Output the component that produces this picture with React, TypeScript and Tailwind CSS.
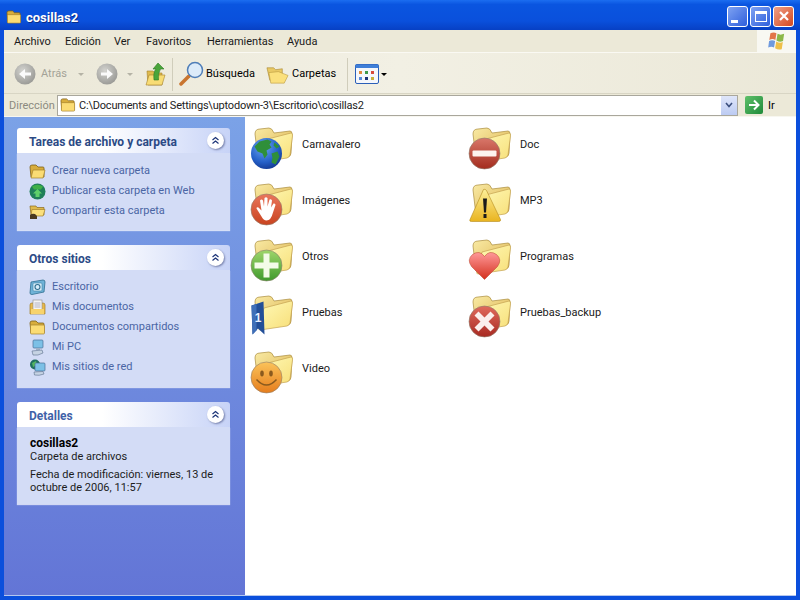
import * as React from 'react';

const FONT = "font-['Roboto','Liberation_Sans',sans-serif]";

const BigFolder: React.FC<{ children?: React.ReactNode; id: string }> = ({ children, id }) => (
  <svg viewBox="0 0 44 44" className="w-[44px] h-[44px] shrink-0">
    <defs>
      <linearGradient id={`back-${id}`} x1="0" y1="0" x2="1" y2="1">
        <stop offset="0" stopColor="#f9eaa4" />
        <stop offset="1" stopColor="#dcb34f" />
      </linearGradient>
      <linearGradient id={`front-${id}`} x1="0" y1="0" x2="1" y2="1">
        <stop offset="0" stopColor="#fffab8" />
        <stop offset="1" stopColor="#f7de78" />
      </linearGradient>
    </defs>
    <path d="M5 8 Q5 3 10 3 L19 2 Q22 2 24 7 L40 5 Q42 5 42 8 L41 27 Q41 30 38 31 L8 33 Z" fill={`url(#back-${id})`} stroke="#a98b3c" strokeWidth="0.7" />
    <path d="M14 14 L41 7 Q43 7 42.5 10 L40 29 Q39.500 31 37 32 L10 36 Q8 36 9 33 Z" fill={`url(#front-${id})`} stroke="#c4a250" strokeWidth="0.7" />
    <g transform="translate(0.5 -1.5)">{children}</g>
  </svg>
);

const Globe = () => (
  <g>
    <defs>
      <radialGradient id="globe" cx="0.4" cy="0.3" r="0.8">
        <stop offset="0" stopColor="#6ba6f2" />
        <stop offset="0.6" stopColor="#2560c8" />
        <stop offset="1" stopColor="#0f2f86" />
      </radialGradient>
    </defs>
    <circle cx="16" cy="29" r="15.500" fill="url(#globe)" />
    <path d="M4 22 L9 17 L17 15 L21 17 L19 20 L21 23 L16 26 L17 30 L14 34 L12 29 L7 27 Z" fill="#2f8f3a" />
    <path d="M21 29 L27 27 L29 32 L25 40 L21 38 L22 33 Z" fill="#2f8f3a" />
    <path d="M24 18 L29 22 L26 24 L23 21 Z" fill="#2f8f3a" />
  </g>
);

const Stop: React.FC<{ id: string; children: React.ReactNode; top?: string; bottom?: string }> = ({
  id,
  children,
  top = '#ee7d63',
  bottom = '#b8331c',
}) => (
  <g>
    <defs>
      <linearGradient id={id} x1="0" y1="0" x2="0" y2="1">
        <stop offset="0" stopColor={top} />
        <stop offset="1" stopColor={bottom} />
      </linearGradient>
    </defs>
    <circle cx="16" cy="29" r="15.500" fill={`url(#${id})`} stroke="#8f7f6f" strokeWidth="0.6" />
    {children}
  </g>
);

const Hand = () => (
  <Stop id="hand" top="#e9765c" bottom="#c9431f">
    <path d="M11 36 L6 28 Q6 26 8 27 L11 30 L9.500 20 Q11 18 12.500 20 L13.500 26 L14 17.500 Q15.500 16 17 17.500 L17 26 L19 19 Q20.500 18 21.500 20 L20.500 27 L23 23 Q25 22.500 25 24.500 L22.500 32 Q20.500 40 16 40 Q13 40 11 36 Z" fill="#fff" />
  </Stop>
);

const Plus = () => (
  <Stop id="plus" top="#9fd66b" bottom="#3f9a2d">
    <path d="M13 17 H19 V26 H28 V32 H19 V41 H13 V32 H4 V26 H13 Z" fill="#f3fbe8" />
  </Stop>
);

const Ribbon = () => (
  <g>
    <path d="M1 13 L13 9 L14 42 L7.500 36 L2 42 Z" fill="#234f98" />
    <path d="M1 13 L6 11.500 L6 38 L2 42 Z" fill="#3f6fb8" />
    <text x="7.500" y="29" fontSize="12" fontWeight="700" textAnchor="middle" fill="#e8f0ff" className="font-['Liberation_Sans']">1</text>
  </g>
);

const Smile = () => (
  <Stop id="smile" top="#fbc35a" bottom="#e57d1d">
    <ellipse cx="11.500" cy="25" rx="1.800" ry="3" fill="#8a5a1e" />
    <ellipse cx="20.500" cy="25" rx="1.800" ry="3" fill="#8a5a1e" />
    <path d="M6 31 Q16 42 26 31" fill="none" stroke="#8a5a1e" strokeWidth="1.500" />
  </Stop>
);

const Minus = () => (
  <Stop id="minus" top="#d9776a" bottom="#a32c1d">
    <rect x="4" y="26" width="24" height="6" rx="1" fill="#fdf3ee" />
  </Stop>
);

const Warning = () => (
  <g>
    <defs>
      <linearGradient id="warn" x1="0" y1="0" x2="0" y2="1">
        <stop offset="0" stopColor="#fdf09a" />
        <stop offset="1" stopColor="#e9b420" />
      </linearGradient>
    </defs>
    <path d="M15 9 Q16.500 8 18 10 L32 39 Q32.500 41 30 41 L3 41 Q0.500 41 1.500 39 Z" fill="url(#warn)" stroke="#b48a1c" strokeWidth="0.6" />
    <path d="M14.500 18 H18.500 L17.500 32 H15.500 Z" fill="#1a1a1a" />
    <rect x="15" y="33.500" width="3" height="4" fill="#1a1a1a" />
  </g>
);

const Heart = () => (
  <g>
    <defs>
      <linearGradient id="heart" x1="0" y1="0" x2="0" y2="1">
        <stop offset="0" stopColor="#f99" />
        <stop offset="1" stopColor="#d4301e" />
      </linearGradient>
    </defs>
    <path d="M16 43 L3 30 Q-2 23 4 18 Q11 13 16 20 Q21 13 28 18 Q34 23 29 30 Z" fill="url(#heart)" stroke="#b8402a" strokeWidth="0.5" />
  </g>
);

const Cross = () => (
  <Stop id="cross" top="#e06a5c" bottom="#a82a22">
    <path d="M10 19 L16 25 L22 19 L26 23 L20 29 L26 35 L22 39 L16 33 L10 39 L6 35 L12 29 L6 23 Z" fill="#fbefec" />
  </Stop>
);

const files = [
  { name: 'Carnavalero', overlay: <Globe /> },
  { name: 'Doc', overlay: <Minus /> },
  { name: 'Imágenes', overlay: <Hand /> },
  { name: 'MP3', overlay: <Warning /> },
  { name: 'Otros', overlay: <Plus /> },
  { name: 'Programas', overlay: <Heart /> },
  { name: 'Pruebas', overlay: <Ribbon /> },
  { name: 'Pruebas_backup', overlay: <Cross /> },
  { name: 'Video', overlay: <Smile /> },
];

const SmallFolder: React.FC<{ open?: boolean; className?: string }> = ({ open, className = 'w-[17px] h-[17px]' }) => (
  <svg viewBox="0 0 17 17" className={className + ' shrink-0'}>
    <path d="M1 4 Q1 2 3 2 H7 L9 4 H14 Q15 4 15 5 V14 H2 Z" fill="#d8ad3c" stroke="#7f5f18" strokeWidth="0.8" />
    {open ? (
      <path d="M2 15 L4 7 H16 L14 15 Z" fill="#fbdc74" stroke="#a5812c" strokeWidth="0.7" />
    ) : (
      <rect x="1.500" y="6" width="14" height="9" rx="1" fill="#fbdc74" stroke="#a5812c" strokeWidth="0.7" />
    )}
  </svg>
);

const GlobeSmall = () => (
  <svg viewBox="0 0 17 17" className="w-[17px] h-[17px] shrink-0">
    <circle cx="8.500" cy="8.500" r="8" fill="#1f7f5a" />
    <path d="M3 3.500 Q8 0 14 3.500 L12 6.500 L5 6.500 Z" fill="#3fb048" />
    <path d="M8.500 6 L13 10.500 H10.500 V14 H6.500 V10.500 H4 Z" fill="#5ed06a" />
  </svg>
);

const ShareSmall = () => (
  <svg viewBox="0 0 17 17" className="w-[17px] h-[17px] shrink-0">
    <path d="M1 3 H7 L8 4.500 H15 V12 H2 Z" fill="#dfba4c" stroke="#8a6a1e" strokeWidth="0.7" />
    <path d="M3 6.500 H16 L14 13 H2 Z" fill="#fbe07c" stroke="#a5812c" strokeWidth="0.7" />
    <path d="M1 12 Q3 10 6 11 L8 13 V16 H1 Z" fill="#4a3a20" />
  </svg>
);

const DesktopSmall = () => (
  <svg viewBox="0 0 17 17" className="w-[17px] h-[17px] shrink-0">
    <path d="M2 3 L14 1 Q16 1 16 3 L15 13 L3 15.500 Q1 15.500 1 14 Z" fill="#6fb3d8" stroke="#2f6f8f" strokeWidth="0.8" />
    <rect x="4" y="4" width="9" height="8" rx="1" fill="#d8eefa" stroke="#3b7fa3" strokeWidth="0.6" />
    <circle cx="8.500" cy="8" r="2.500" fill="none" stroke="#2f6f8f" strokeWidth="1.100" />
  </svg>
);

const DocsSmall = () => (
  <svg viewBox="0 0 17 17" className="w-[17px] h-[17px] shrink-0">
    <path d="M1 6 Q1 4 3 4 H14 Q16 4 16 6 V15 H1 Z" fill="#e9b94a" stroke="#a5812c" strokeWidth="0.7" />
    <rect x="4" y="1" width="9" height="11" fill="#f4f4f4" stroke="#8a8a8a" strokeWidth="0.6" />
    <path d="M5.500 4 H11.500 M5.500 6 H11.500 M5.500 8 H11.500" stroke="#9a9ab0" strokeWidth="0.7" />
    <rect x="2" y="10" width="13" height="5" fill="#f7d36c" />
  </svg>
);

const PcSmall = () => (
  <svg viewBox="0 0 17 17" className="w-[17px] h-[17px] shrink-0">
    <rect x="4" y="1" width="10" height="8" rx="1" fill="#7cc0e6" stroke="#4a6f96" strokeWidth="0.7" />
    <path d="M7 9 H11 V11 H7 Z" fill="#9fb1c7" />
    <path d="M3 12 L13 11 L14 14 Q9 17 4 16 Z" fill="#c6d3e3" stroke="#5a6f8c" strokeWidth="0.6" />
  </svg>
);

const NetSmall = () => (
  <svg viewBox="0 0 17 17" className="w-[17px] h-[17px] shrink-0">
    <circle cx="6" cy="5.500" r="5" fill="#1f6f60" />
    <path d="M3 4 L7 2 L8 6 L4 8 Z" fill="#54b85e" />
    <rect x="6" y="4" width="10" height="8" rx="1" fill="#7cc0e6" stroke="#4a6f96" strokeWidth="0.7" />
    <path d="M5 13 L14 12.500 L15 15 Q10 17 5.500 16 Z" fill="#c6d3e3" stroke="#5a6f8c" strokeWidth="0.6" />
  </svg>
);

const Collapse = () => (
  <span className="w-[17px] h-[17px] rounded-full bg-white shadow-[1px_1px_2px_rgba(60,70,120,0.6)] flex items-center justify-center">
    <svg viewBox="0 0 9 9" className="w-[9px] h-[9px]">
      <path d="M1.500 4 L4.500 1.500 L7.500 4 M1.500 7.500 L4.500 5 L7.500 7.500" fill="none" stroke="#1c3478" strokeWidth="1.200" />
    </svg>
  </span>
);

const Panel: React.FC<{ title: string; titleClass?: string; children: React.ReactNode }> = ({
  title,
  titleClass = 'text-[#2c4a85]',
  children,
}) => (
  <section className="w-[213px]">
    <div className="h-[25px] rounded-t-[3px] bg-[linear-gradient(90deg,#ffffff_40%,#c7d3f7)] flex items-center justify-between pl-[12px] pr-[6px]">
      <h2 className={`mt-[2px] text-[12px] font-bold ${titleClass}`}>{title}</h2>
      <Collapse />
    </div>
    <div className="bg-[#d3dcf6] shadow-[0_1px_1px_rgba(255,255,255,0.7)]">{children}</div>
  </section>
);

const TaskLink: React.FC<{ icon: React.ReactNode; label: string }> = ({ icon, label }) => (
  <a className="h-[20px] flex items-center gap-[6px] text-[11px] text-[#4a65a4]">
    {icon}
    <span>{label}</span>
  </a>
);

const MenuItem: React.FC<{ label: string; w: string }> = ({ label, w }) => <span className={w}>{label}</span>;

const WinButton: React.FC<{ children: React.ReactNode; className: string }> = ({ children, className }) => (
  <div className={`w-[21px] h-[21px] rounded-[3px] border border-white flex items-center justify-center ${className}`}>
    {children}
  </div>
);

const NavArrow: React.FC<{ flip?: boolean }> = ({ flip }) => (
  <svg viewBox="0 0 22 22" className="w-[22px] h-[22px] shrink-0">
    <defs>
      <radialGradient id="nav" cx="0.4" cy="0.35" r="0.8">
        <stop offset="0" stopColor="#d4d4d0" />
        <stop offset="1" stopColor="#8f8f8b" />
      </radialGradient>
    </defs>
    <circle cx="11" cy="11" r="10.500" fill="url(#nav)" />
    <path
      d={flip ? 'M5 9.500 H11 V6 L17 11 L11 16 V12.500 H5 Z' : 'M17 9.500 H11 V6 L5 11 L11 16 V12.500 H17 Z'}
      fill="#fbfbfb"
    />
  </svg>
);

const Caret: React.FC<{ className?: string }> = ({ className = 'border-t-[#b5b3a6]' }) => (
  <span className={`w-0 h-0 border-x-[3px] border-x-transparent border-t-[3px] ${className}`} />
);

export default function App() {
  return (
    <div className={`${FONT} w-[800px] h-[600px] overflow-hidden flex flex-col bg-[#0b4fdc] text-[11px] text-black`}>
      <header className="h-[30px] shrink-0 flex items-center pl-[6px] pr-[6px] bg-[linear-gradient(180deg,#1b6df0_0%,#0a55e0_15%,#0a50dc_70%,#0740c4_100%)]">
        <div className="flex items-center mt-[4px]">
          <SmallFolder className="w-[16px] h-[16px]" />
          <h1 className="ml-[4px] mt-[1px] text-[13px] font-bold text-white [text-shadow:1px_1px_#0a2f8a]">cosillas2</h1>
        </div>
        <div className="ml-auto flex gap-[2px] mt-[2px]">
          <WinButton className="bg-[linear-gradient(135deg,#7ea2f2,#2f5fdc)]">
            <span className="w-[7px] h-[3px] bg-white mt-[10px] mr-[6px]" />
          </WinButton>
          <WinButton className="bg-[linear-gradient(135deg,#7ea2f2,#2f5fdc)]">
            <span className="w-[12px] h-[11px] border border-white border-t-[3px]" />
          </WinButton>
          <WinButton className="bg-[linear-gradient(135deg,#f0a088,#d4481f)]">
            <svg viewBox="0 0 12 12" className="w-[12px] h-[12px]">
              <path d="M2 2 L10 10 M10 2 L2 10" stroke="#fff" strokeWidth="2.200" />
            </svg>
          </WinButton>
        </div>
      </header>

      <div className="flex-1 min-h-0 mx-[4px] flex flex-col bg-[#ece9d8]">
        <nav className="h-[23px] shrink-0 flex items-center border-b border-[#faf9f3] bg-[#ece9d8] text-[#1a1a1a]">
          <div className="flex pl-[10px] mt-[2px]">
            <MenuItem label="Archivo" w="w-[51px]" />
            <MenuItem label="Edición" w="w-[49px]" />
            <MenuItem label="Ver" w="w-[32px]" />
            <MenuItem label="Favoritos" w="w-[61px]" />
            <MenuItem label="Herramientas" w="w-[80px]" />
            <MenuItem label="Ayuda" w="w-[40px]" />
          </div>
          <div className="ml-auto w-[39px] h-[22px] bg-[#f8f8f2] flex items-center justify-center">
            <svg viewBox="0 0 20 18" className="w-[22px] h-[20px]">
              <path d="M4 2 Q7 0.500 9.500 2 L8.500 8 Q6 6.500 3 8 Z" fill="#e2764a" />
              <path d="M10.500 2.500 Q13 4 16.500 2.500 L15.500 9 Q12.500 10.500 9.500 8.500 Z" fill="#8cb84a" />
              <path d="M2.800 9 Q5.500 7.500 8.300 9 L7.300 15 Q5 13.500 2 15 Z" fill="#6f9ade" />
              <path d="M9.300 9.500 Q12.500 11.500 15.300 10 L14.300 16.500 Q11 17.500 8.300 15.500 Z" fill="#eec04a" />
            </svg>
          </div>
        </nav>

        <div className="h-[41px] shrink-0 flex items-center pl-[10px] pt-[2px] border-b border-[#d8d5c4] bg-[linear-gradient(90deg,#ebe8d8,#f2f0e4_50%,#ebe8d8)]">
          <NavArrow />
          <span className="ml-[5px] w-[26px] text-[#a3a297]">Atrás</span>
          <Caret className="ml-[11px] border-t-[#b5b3a6]" />
          <span className="ml-[12px]"><NavArrow flip /></span>
          <Caret className="ml-[9px] border-t-[#b5b3a6]" />
          <svg viewBox="0 0 22 26" className="ml-[12px] w-[22px] h-[26px]">
            <path d="M2 10 H8 L10 12 H17 V24 H3 Z" fill="#dfba4c" stroke="#a5812c" strokeWidth="0.6" />
            <path d="M1 24 L4 14 H20 L17 24 Z" fill="#f8dc74" stroke="#a5812c" strokeWidth="0.6" />
            <path d="M9 19 Q8 11 11 8 L8 8 L13 2 L19 8 L15.500 8 Q13 12 13.500 19 Z" fill="#4aa53a" stroke="#2b7a22" strokeWidth="0.6" />
          </svg>
          <span className="ml-[5px] w-px h-[33px] bg-[#d0cdbb]" />
          <svg viewBox="0 0 25 26" className="ml-[6px] w-[25px] h-[26px]">
            <path d="M2 23 L10 15" stroke="#c9752f" strokeWidth="3.500" strokeLinecap="round" />
            <circle cx="16" cy="9" r="7.500" fill="#dcebf9" stroke="#4f7eb8" strokeWidth="1.500" />
          </svg>
          <span className="ml-[2px] w-[60px]">Búsqueda</span>
          <svg viewBox="0 0 24 24" className="w-[23px] h-[23px]">
            <path d="M1 5 H8 L10 7 L17 6 V18 H4 Z" fill="#e9c964" stroke="#a5812c" strokeWidth="0.6" />
            <path d="M5 21 L3 10 L13 9 L23 13 L19 21 Z" fill="#fbe07c" stroke="#b8983e" strokeWidth="0.6" />
          </svg>
          <span className="ml-[3px] w-[55px]">Carpetas</span>
          <span className="w-px h-[33px] bg-[#d0cdbb]" />
          <svg viewBox="0 0 24 20" className="ml-[7px] w-[24px] h-[20px]">
            <rect x="0.500" y="0.500" width="23" height="19" rx="1.500" fill="#f5f7fb" stroke="#2b5fb8" />
            <rect x="0.500" y="0.500" width="23" height="3.500" fill="#3f7fd8" />
            <path d="M4 7 h3 v3 h-3 Z" fill="#e08a3a" />
            <path d="M10 7 h3 v3 h-3 Z" fill="#3f9a4a" />
            <path d="M16 7 h3 v3 h-3 Z" fill="#d84a3a" />
            <path d="M4 13 h3 v3 h-3 Z" fill="#5a8ad8" />
            <path d="M10 13 h3 v3 h-3 Z" fill="#1c3478" />
            <path d="M16 13 h3 v3 h-3 Z" fill="#c8b03a" />
          </svg>
          <Caret className="ml-[2px] border-t-black" />
        </div>

        <div className="h-[23px] shrink-0 flex items-center pl-[5px] border-b border-[#f8f7f0] bg-[#ece9d8]">
          <span className="w-[48px] mt-[2px] text-[#8b8a80]">Dirección</span>
          <div className="w-[681px] h-[21px] bg-white border border-[#a9a79c] flex items-center pl-[2px]">
            <SmallFolder className="w-[16px] h-[16px]" />
            <span className="ml-[3px] mt-[2px] tracking-[-0.2px] text-[#222]">C:\Documents and Settings\uptodown-3\Escritorio\cosillas2</span>
            <span className="ml-auto w-[16px] h-[19px] bg-[linear-gradient(180deg,#dfe6fa,#bccbf2)] flex items-center justify-center">
              <svg viewBox="0 0 8 6" className="w-[8px] h-[6px]">
                <path d="M1 1 L4 4.500 L7 1" fill="none" stroke="#3b4f7e" strokeWidth="1.600" />
              </svg>
            </span>
          </div>
          <span className="ml-[7px] w-[18px] h-[18px] rounded-[2px] bg-[linear-gradient(135deg,#5fc06a,#1f8a3a)] flex items-center justify-center">
            <svg viewBox="0 0 14 14" className="w-[14px] h-[14px]">
              <path d="M2 7 H11 M7 2.500 L11.500 7 L7 11.500" fill="none" stroke="#fff" strokeWidth="2" />
            </svg>
          </span>
          <span className="ml-[5px] mt-[2px]">Ir</span>
        </div>

        <main className="flex-1 min-h-0 flex border-b border-[#b5c7ef]">
          <aside className="w-[241px] shrink-0 pl-[13px] pt-[11px] flex flex-col gap-[15px] bg-[linear-gradient(180deg,#7ba2e7,#6375d6)]">
            <Panel title="Tareas de archivo y carpeta">
              <div className="pl-[12px] pt-[8px] pb-[9px]">
                <TaskLink icon={<SmallFolder open />} label="Crear nueva carpeta" />
                <TaskLink icon={<GlobeSmall />} label="Publicar esta carpeta en Web" />
                <TaskLink icon={<ShareSmall />} label="Compartir esta carpeta" />
              </div>
            </Panel>
            <Panel title="Otros sitios" titleClass="text-[#2b4a86]">
              <div className="pl-[12px] pt-[7px] pb-[10px]">
                <TaskLink icon={<DesktopSmall />} label="Escritorio" />
                <TaskLink icon={<DocsSmall />} label="Mis documentos" />
                <TaskLink icon={<SmallFolder />} label="Documentos compartidos" />
                <TaskLink icon={<PcSmall />} label="Mi PC" />
                <TaskLink icon={<NetSmall />} label="Mis sitios de red" />
              </div>
            </Panel>
            <Panel title="Detalles" titleClass="text-[#3f62a8]">
              <div className="px-[13px] pt-[10px] pb-[10px] text-[#1c1c1c] leading-[13px]">
                <p className="font-bold text-[12px] leading-[13px] text-black">cosillas2</p>
                <p>Carpeta de archivos</p>
                <p className="mt-[5px]">Fecha de modificación: viernes, 13 de octubre de 2006, 11:57</p>
              </div>
            </Panel>
          </aside>

          <section className="flex-1 bg-white pl-[5px] pt-[3px] grid grid-cols-[218px_218px] auto-rows-[56px] content-start">
            {files.map((f) => (
              <div key={f.name} className="h-[56px] flex items-center gap-[8px] text-[#1a1a1a]">
                <BigFolder id={f.name}>{f.overlay}</BigFolder>
                <span className="-mt-[5px]">{f.name}</span>
              </div>
            ))}
          </section>
        </main>
      </div>
      <footer className="h-[4px] shrink-0 bg-[#0b4fdc]" />
    </div>
  );
}
